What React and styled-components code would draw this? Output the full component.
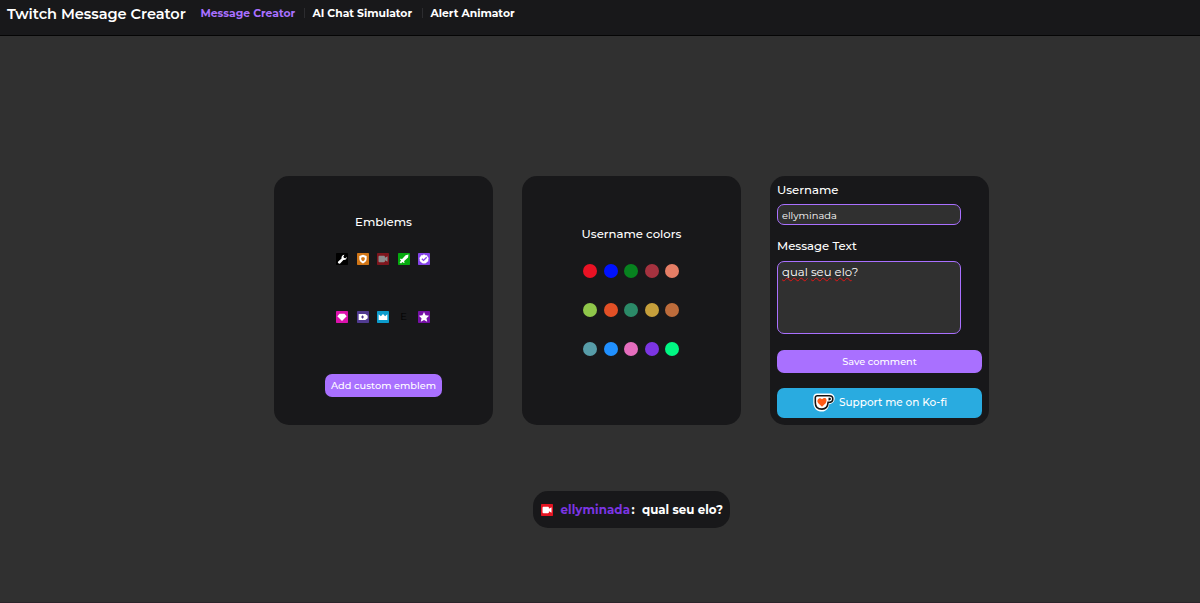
import React from 'react'
import styled, { createGlobalStyle } from 'styled-components'

const pageColor = '#303030'
const cardColor = '#18181a'
const purple = '#a970ff'
const font = `Montserrat, Inter, sans-serif`

const links = [
  { label: 'Message Creator', active: true, width: 95 },
  { label: 'AI Chat Simulator', width: 101 },
  { label: 'Alert Animator', width: 85 },
]

const colorRows = [
  ['#e91224', '#0012ff', '#07821f', '#a5323f', '#e57e66'],
  ['#8fc64a', '#e25026', '#2b8a68', '#c69f3b', '#bd6c3b'],
  ['#579ca8', '#2090ff', '#e56dbd', '#7c35e3', '#00f783'],
]

const badges = {
  moderator: {
    color: '#000000',
    shape: <path d="M3 13.2 8.3 8.4C7.8 5.4 9.5 3 12.6 2.8L11 5.5l1.2 2 2.2.2 1.5-2.2c.5 3.1-1.6 5.5-4.8 5L6.2 15.6 4.7 16 2.8 14.8Z" />,
  },
  shield: {
    color: '#d07516',
    shape: (
      <path
        fillRule="evenodd"
        d="M9 2.5 14.5 4.5v4.300c0 3.200-2.200 5.400-5.500 6.900-3.300-1.500-5.500-3.700-5.500-6.900V4.500ZM9 6 6.300 7v1.800c0 1.600 1 2.700 2.700 3.600 1.700-.9 2.700-2 2.700-3.600V7Z"
      />
    ),
  },
  broadcaster: {
    color: '#e31421',
    shape: <path d="M3.700 4.200h6.800c.8 0 1.400.6 1.400 1.400v1.700L15.800 5v8L11.900 10.700v1.700c0 .8-.6 1.400-1.400 1.400H3.700c-.8 0-1.400-.6-1.400-1.400V5.600c0-.8.6-1.400 1.400-1.400Z" />,
  },
  sword: {
    color: '#05a90e',
    shape: <path d="m15.800 2.200-.7 4.500-6.200 5.600 1.200 1.500-1.200 1.300-2.300-1.500-2.100 2.200-2.100-2.100 2.200-2.100-1.700-2.200 1.400-1.300 1.500 1.300 5.600-6.200Z" />,
  },
  verified: {
    color: '#8442e8',
    shape: (
      <path
        fillRule="evenodd"
        d="m9 2 2 1.200 2.400.1 1.100 2.200L16 7.600 15.400 10l.1 2.300-2 1.200L11.800 15.300 9 15.800 6.500 15.200 4.300 13.500 2.600 12.100V9.800L2 7.600 3.500 5.500 4.600 3.300 7 3.200ZM12.300 5.800 8.300 9.700 6.500 8 5.100 9.400 8.300 12.500 13.700 7.200Z"
      />
    ),
  },
  diamond: {
    color: '#dc12ad',
    shape: <path d="M5.300 4h7.400L16 8 9 15 2 8Z" />,
  },
  prime: {
    color: '#513b91',
    shape: (
      <path
        fillRule="evenodd"
        d="M2.500 4.500h10L16 7.200v3.600l-3.500 2.700h-10ZM7.500 6.800v1.400H6.100v1.600h1.400v1.400h1.600V9.800h1.400V8.200H9.100V6.800Z"
      />
    ),
  },
  crown: {
    color: '#0c9bcc',
    shape: <path d="m2.500 5 3.300 3L9 4.500 12.200 8l3.300-3v8.500h-13Z" />,
  },
  star: {
    color: '#7610a6',
    shape: <path d="m9 1.500 2.300 5 5.400.6-4 3.600 1.100 5.400L9 13.400l-4.800 2.700 1.100-5.400-4-3.600 5.400-.6Z" />,
  },
}

const emblemRows = [
  ['moderator', 'shield', 'broadcaster', 'sword', 'verified'],
  ['diamond', 'prime', 'crown', null, 'star'],
]

const Badge = ({ name, faded }) => (
  <StyledBadge viewBox="0 0 18 18" $faded={faded}>
    <rect width="18" height="18" rx="1" fill={badges[name].color} />
    <g fill="#ffffff">{badges[name].shape}</g>
  </StyledBadge>
)

const KofiCup = () => (
  <CupIcon viewBox="0 0 22 19">
    <path
      d="M4 .5h12.500c3.200 0 5.200 2 5.200 5 0 3-2.200 5.400-5.500 5.700-.7 4.300-3.100 7.300-7.200 7.300-5.300 0-8.700-3.500-8.700-8.800V4.500C.3 2 1.800.5 4 .5Z"
      fill="#ffffff"
    />
    <path
      d="M4.300 2.700h11.900c2.200 0 3.600 1.200 3.600 3.200 0 2.200-1.700 3.500-4.700 3.500-.3 4.200-2.400 6.700-6.100 6.700-4.300 0-6.700-2.500-6.700-6.700V4.700c0-1.300.8-2 2-2Z"
      fill="#ffffff"
      stroke="#141414"
      strokeWidth="1.600"
    />
    <path d="M15.500 4.800h.9c1 0 1.500.5 1.500 1.300s-.8 1.500-2.400 1.400Z" fill="#141414" />
    <path d="M9 13.800 5.300 10.200C2.700 7.200 6.500 3.400 9 6.200c2.500-2.800 6.300-.8 3.700 4Z" fill="#ff5a16" />
  </CupIcon>
)

const Header = () => (
  <StyledHeader>
    <SiteTitle>Twitch Message Creator</SiteTitle>
    <Nav>
      {links.map(link => (
        <NavLink key={link.label} $active={link.active} $width={link.width}>
          {link.label}
        </NavLink>
      ))}
    </Nav>
  </StyledHeader>
)

const App = () => (
  <>
    <GlobalStyle />
    <Header />
    <Main>
      <Cards>
        <Card>
          <CardTitle $top={37}>Emblems</CardTitle>
          <EmblemGrid>
            {emblemRows.map((row, i) => (
              <Row key={i} $gap={8.5}>
                {row.map((name, j) =>
                  name ? (
                    <Badge key={j} name={name} faded={name === 'broadcaster'} />
                  ) : (
                    <MissingBadge key={j}>E</MissingBadge>
                  )
                )}
              </Row>
            ))}
          </EmblemGrid>
          <EmblemButton>Add custom emblem</EmblemButton>
        </Card>

        <Card>
          <CardTitle $top={49}>Username colors</CardTitle>
          <ColorGrid>
            {colorRows.map((row, i) => (
              <Row key={i} $gap={6.5}>
                {row.map(color => (
                  <Swatch key={color} $color={color} />
                ))}
              </Row>
            ))}
          </ColorGrid>
        </Card>

        <Card $form>
          <Label>Username</Label>
          <Input defaultValue="ellyminada" />
          <Label>Message Text</Label>
          <MessageBox>
            <Misspelled>qual</Misspelled> <Misspelled>seu</Misspelled> <Misspelled>elo</Misspelled>?
          </MessageBox>
          <SaveButton>Save comment</SaveButton>
          <KofiButton>
            <KofiCup />
            Support me on Ko-fi
          </KofiButton>
        </Card>
      </Cards>

      <ChatMessage>
        <Badge name="broadcaster" />
        <ChatName>ellyminada</ChatName>
        <ChatColon>:</ChatColon>
        <ChatText>qual seu elo?</ChatText>
      </ChatMessage>
    </Main>
  </>
)

export default App

const GlobalStyle = createGlobalStyle`
  * {
    box-sizing: border-box;
  }
  body {
    margin: 0;
    background-color: ${pageColor};
    color: #ffffff;
    font-family: ${font};
    overflow: hidden;
  }
  button, input {
    font-family: inherit;
  }
`

const StyledHeader = styled.header`
  display: flex;
  align-items: flex-start;
  height: 36px;
  padding: 0 7px;
  background-color: ${cardColor};
  border-bottom: 1px solid #050505;
`

const SiteTitle = styled.h1`
  width: 179px;
  margin: 4px 0 0;
  font-size: 14.6px;
  line-height: 20px;
  font-weight: 600;
  letter-spacing: -0.06px;
  white-space: nowrap;
`

const Nav = styled.nav`
  display: flex;
  margin: 5px 0 0 14.5px;
`

const NavLink = styled.a`
  display: flex;
  align-items: center;
  box-sizing: content-box;
  width: ${props => props.$width}px;
  height: 16px;
  padding-right: 8px;
  margin-right: 9px;
  font-size: 10.8px;
  font-weight: 700;
  white-space: nowrap;
  color: ${props => (props.$active ? purple : '#ffffff')};

  &:not(:last-child)::after {
    content: '';
    flex: none;
    width: 1px;
    height: 10px;
    margin-left: auto;
    margin-right: -9px;
    background-color: #2c2c2f;
  }
`

const Main = styled.main`
  display: flex;
  flex-direction: column;
  align-items: center;
  height: 567px;
  padding: 140px 0 0 63px;
  border-bottom: 1px solid #2a242a;
`

const Cards = styled.div`
  display: flex;
  gap: 29px;
`

const Card = styled.section`
  display: flex;
  flex-direction: column;
  align-items: ${props => (props.$form ? 'flex-start' : 'center')};
  width: 219px;
  height: 249px;
  padding: ${props => (props.$form ? '7px' : '0')};
  background-color: ${cardColor};
  border-radius: 15px;
`

const CardTitle = styled.h2`
  margin: ${props => props.$top}px 0 0;
  font-size: 11.7px;
  line-height: 18px;
  font-weight: 500;
`

const Row = styled.div`
  display: flex;
  gap: ${props => props.$gap}px;
`

const EmblemGrid = styled.div`
  display: flex;
  flex-direction: column;
  gap: 46px;
  margin: 22px 0.6px 0 0;
`

const StyledBadge = styled.svg`
  display: block;
  flex: none;
  width: 12px;
  height: 12px;
  opacity: ${props => (props.$faded ? 0.5 : 1)};
`

const MissingBadge = styled.span`
  width: 12px;
  font-size: 10px;
  line-height: 12px;
  text-align: center;
  color: #000000;
`

const Button = styled.button`
  display: flex;
  align-items: center;
  justify-content: center;
  height: 23px;
  padding: 0;
  border: 0;
  border-radius: 7px;
  background-color: ${purple};
  color: #ffffff;
  font-size: 9.75px;
  font-weight: 500;
  white-space: nowrap;
`

const EmblemButton = styled(Button)`
  width: 117px;
  margin-top: 51px;
`

const ColorGrid = styled.div`
  display: flex;
  flex-direction: column;
  gap: 25px;
  margin: 21px 0.2px 0 0;
`

const Swatch = styled.span`
  width: 14px;
  height: 14px;
  border-radius: 50%;
  background-color: ${props => props.$color};
`

const Label = styled.label`
  font-size: 11.7px;
  line-height: 15px;
  font-weight: 500;
`

const Input = styled.input`
  width: 184px;
  height: 21px;
  margin: 6px 0 14px;
  padding: 0 4px;
  border: 1px solid ${purple};
  border-radius: 7px;
  outline: 0;
  background-color: ${pageColor};
  color: #ffffff;
  font-size: 9.9px;
`

const MessageBox = styled.div`
  width: 184px;
  height: 73px;
  margin: 7px 0 15.5px;
  padding: 2px 4px;
  border: 1px solid ${purple};
  border-radius: 7px;
  background-color: ${pageColor};
  color: #ffffff;
  font-size: 11.7px;
  line-height: 16px;
`

const Misspelled = styled.span`
  text-decoration: underline wavy #e01515 1px;
  text-decoration-skip-ink: none;
  text-underline-offset: 0.5px;
`

const SaveButton = styled(Button)`
  width: 205px;
  padding-top: 1px;
`

const KofiButton = styled(Button)`
  gap: 4px;
  width: 205px;
  height: 30px;
  margin-top: 15px;
  padding-left: 1px;
  background-color: #29abe0;
  font-size: 10.5px;
`

const CupIcon = styled.svg`
  width: 22px;
  height: 19px;
`

const ChatMessage = styled.div`
  display: flex;
  align-items: center;
  width: 197px;
  height: 37px;
  margin-top: 66px;
  padding-left: 7.5px;
  border-radius: 15px;
  background-color: ${cardColor};
  font-size: 11.85px;
  font-weight: 700;
  white-space: nowrap;
`

const ChatName = styled.span`
  width: 71px;
  margin-left: 8px;
  letter-spacing: 0.08px;
  color: #7c35e3;
`

const ChatColon = styled.span`
  width: 10.5px;
`

const ChatText = styled.span``
